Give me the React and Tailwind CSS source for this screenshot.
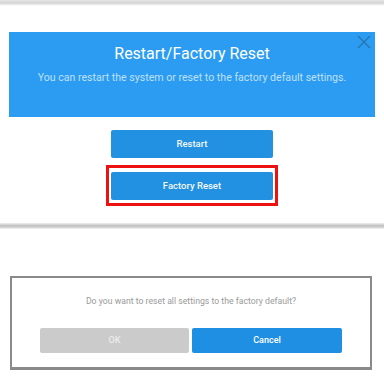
export default function App() {
  return (
    <div className="w-[384px] h-[384px] bg-white overflow-hidden font-['Roboto','Liberation_Sans',sans-serif]">
      {/* top edge */}
      <div className="h-[6px] bg-gradient-to-b from-[#e6e6e6] via-[#d4d4d4] to-white" />

      {/* header panel */}
      <div className="relative mt-[26px] mx-[9px] h-[85px] bg-[#2b9cf2] flex flex-col items-center">
        <h1 className="mt-[11px] text-[16px] leading-[22px] text-white">Restart/Factory Reset</h1>
        <p className="mt-[7px] text-[10.6px] leading-[12px] text-[#bfe0fb]">
          You can restart the system or reset to the factory default settings.
        </p>
        <svg className="absolute right-[4px] top-[3px]" width="14" height="14" viewBox="0 0 14 14">
          <path d="M1 1 L13 13 M13 1 L1 13" stroke="#2774b0" strokeWidth="1.3" fill="none" />
        </svg>
      </div>

      {/* actions */}
      <div className="flex flex-col items-center mt-[13px]">
        <button className="w-[162px] h-[28px] rounded-[2px] bg-[#2291e2] text-[#f2f8fd] text-[9.5px] font-medium">
          Restart
        </button>
        <div className="mt-[7px] border-[3px] border-[#ee1111] px-[2px] pt-[4px] pb-[3px]">
          <button className="block w-[162px] h-[28px] rounded-[2px] bg-[#2291e2] text-[#f2f8fd] text-[9.5px] font-medium">
            Factory Reset
          </button>
        </div>
      </div>

      {/* divider */}
      <div className="mt-[17px] h-[6px] bg-gradient-to-b from-[#f0f0f0] via-[#bdbdbd] to-[#f4f4f4]" />

      {/* confirm dialog */}
      <div className="mt-[47px] ml-[10px] w-[362px] h-[94px] border-2 border-b-[3px] border-[#8a8a8a] bg-white flex flex-col items-center">
        <p className="mt-[18px] text-[8.7px] leading-[11px] text-[#9a9a9a]">
          Do you want to reset all settings to the factory default?
        </p>
        <div className="mt-[21px] flex gap-[3px]">
          <button className="w-[149px] h-[25px] rounded-[2px] bg-[#cbcbcb] text-[#ececec] text-[9px] font-medium">
            OK
          </button>
          <button className="w-[150px] h-[25px] rounded-[2px] bg-[#1e8fe3] text-white text-[9px] font-medium">
            Cancel
          </button>
        </div>
      </div>
    </div>
  );
}
